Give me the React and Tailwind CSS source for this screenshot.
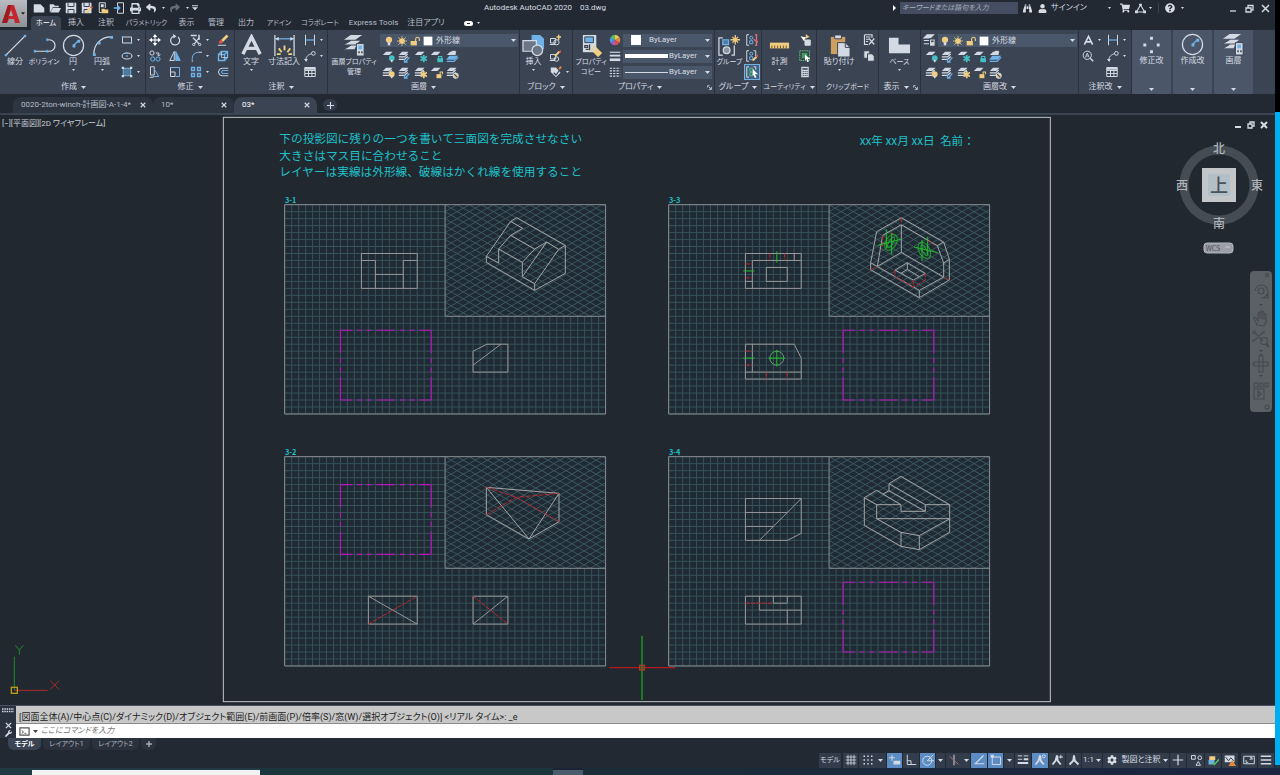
import {
  FaBinoculars,
  FaCog,
  FaPrint,
  FaQuestionCircle,
  FaReply,
  FaShare,
  FaShoppingCart,
  FaUser,
  FaWrench,
} from "react-icons/fa";

const W = "#d3dae3";
const B = "#6fb2ea";
const Y = "#f0cd80";

const Svg = ({ size = 12, box = 16, children }) => (
  <svg
    width={size}
    height={size}
    viewBox={`0 0 ${box} ${box}`}
    fill="none"
    stroke={W}
    strokeWidth="1.3"
    aria-hidden="true"
    className="shrink-0"
  >
    {children}
  </svg>
);

const Caret = () => (
  <svg width="5" height="3" viewBox="0 0 5 3" className="shrink-0" aria-hidden="true">
    <path d="M0 0H5L2.500 3Z" fill={W} />
  </svg>
);

const Dot = () => (
  <svg width="3" height="2" viewBox="0 0 3 2" className="shrink-0" aria-hidden="true">
    <path d="M0 0H3L1.500 2Z" fill={W} />
  </svg>
);

/* ---------- small icons (16 unit box) ---------- */
const icons = {
  newFile: (
    <path d="M1 3H10L15 8V14H1Z" fill={W} stroke="none" />
  ),
  open: (
    <path d="M1 14V3H6L8 5H13V7H5L2 13ZM5 8H16L13 14H2Z" fill={W} stroke="none" />
  ),
  save: (
    <>
      <path d="M1 1H15V15H1Z" fill={W} stroke="none" />
      <path d="M4 1V6H12V1M4 15V10H12V15" stroke="#39424f" />
    </>
  ),
  saveAs: (
    <>
      <path d="M1 1H14V15H1Z" fill={W} stroke="none" />
      <path d="M4 1V6H11V1M4 15V10H9" stroke="#39424f" />
      <path d="M7 14L14 7" stroke={Y} strokeWidth="3" />
      <path d="M13 8L15 6" stroke="#cf5b53" strokeWidth="3" />
    </>
  ),
  webOpen: (
    <>
      <path d="M3 1H11V8M3 1V14H6" />
      <path d="M5 3H9V7H5Z" fill={W} stroke="none" />
      <path d="M6 9H10L11 10H15V15H6Z" fill={Y} stroke="none" />
    </>
  ),
  webSave: (
    <>
      <path d="M6 1H14V15H6Z" />
      <path d="M1 8H8M6 5L9 8L6 11" stroke={B} strokeWidth="2" />
    </>
  ),
  rect: (
    <>
      <path d="M2 4H14V12H2Z" />
      <path d="M1 3h2v2H1zM13 11h2v2h-2z" fill={B} stroke="none" />
    </>
  ),
  ellipse: (
    <>
      <ellipse cx="8" cy="8" rx="6.5" ry="4" />
      <path d="M7 7h2v2H7zM7 3h2v2H7zM13.500 7h2v2h-2z" fill={B} stroke="none" />
    </>
  ),
  hatch: (
    <>
      <path d="M3 3H13V13H3Z" fill="#54789a" stroke={B} />
      <path d="M1 1h3v3H1zM12 1h3v3h-3zM1 12h3v3H1zM12 12h3v3h-3z" fill={W} stroke="none" />
    </>
  ),
  move: (
    <>
      <path d="M8 2V14M2 8H14" strokeWidth="1.800" />
      <path d="M8 0L11 4H5ZM8 16L5 12H11ZM0 8L4 5V11ZM16 8L12 11V5Z" fill="#fff" stroke="none" />
    </>
  ),
  rotate: (
    <>
      <path d="M12 4A6 6 0 1 1 6 3" strokeWidth="1.600" />
      <path d="M5 0L10 3L6 6Z" fill={W} stroke="none" />
    </>
  ),
  trim: (
    <>
      <path d="M1 2H9M12 1V8" stroke={W} strokeWidth="2" />
      <path d="M4 5L12 13M12 5L6 13" strokeWidth="1.600" />
      <circle cx="5" cy="14" r="1.500" />
      <circle cx="13" cy="14" r="1.500" />
    </>
  ),
  erase: (
    <>
      <path d="M6 10L14 2" stroke={Y} strokeWidth="3.500" />
      <path d="M3 12L7 9" stroke="#d9534f" strokeWidth="4" />
      <path d="M1 15H12" />
    </>
  ),
  copy: (
    <>
      <circle cx="4" cy="4" r="2.800" />
      <circle cx="5" cy="12" r="2.800" stroke={B} />
      <circle cx="12" cy="12" r="2.800" stroke={B} />
      <path d="M9 4H13V7M11 6L13 8L15 6" />
    </>
  ),
  mirror: (
    <>
      <path d="M7 2V14H1Z" />
      <path d="M9 2V14H15Z" fill={B} stroke={B} />
    </>
  ),
  fillet: (
    <>
      <path d="M3 15V11A8 8 0 0 1 11 3" stroke={B} />
      <path d="M11 3H16M3 15V16" />
    </>
  ),
  explode: (
    <>
      <path d="M2 6H10V14H2ZM2 6L6 2H14V10L10 14M10 6L14 2" stroke={B} strokeWidth="1.800" />
      <path d="M6 2V10H14" strokeWidth="1" />
    </>
  ),
  stretch: (
    <>
      <path d="M2 1H7V12H2Z" />
      <path d="M7 4L13 14H5" stroke={B} />
      <path d="M1 15H6" />
    </>
  ),
  scale: (
    <>
      <path d="M2 2H14V14H9" stroke={B} />
      <path d="M2 8H8V14H2ZM2 8V2" />
    </>
  ),
  array: (
    <path d="M2 2H6V6H2ZM10 2H14V6H10ZM2 10H6V14H2ZM10 10H14V14H10Z" stroke={B} strokeWidth="1.800" />
  ),
  offset: (
    <>
      <path d="M15 3H7A5 5 0 0 0 7 13H15" />
      <path d="M15 6H8A2 2 0 0 0 8 10H15" stroke={B} />
    </>
  ),
  dim: (
    <>
      <path d="M2 1V15M14 1V15" />
      <path d="M2 8H14" stroke={B} strokeWidth="1.600" />
    </>
  ),
  leader: (
    <>
      <path d="M2 14C3 8 6 6 10 5" />
      <circle cx="12.500" cy="4.500" r="2.500" />
      <path d="M0 12L3 16L5 12Z" fill={W} stroke="none" />
    </>
  ),
  table: (
    <>
      <path d="M1 2H15V14H1ZM1 6H15M1 10H15M6 6V14M10.500 6V14" />
      <path d="M1 2H15V5H1Z" fill={W} stroke="none" />
    </>
  ),
  bulb: (
    <>
      <circle cx="8" cy="6" r="5" fill={Y} stroke="none" />
      <path d="M6 10H10V15H6Z" fill={W} stroke="none" />
    </>
  ),
  sun: (
    <>
      <circle cx="8" cy="8" r="4.500" fill={Y} stroke="none" />
      <path d="M8 0V16M0 8H16M2 2L14 14M14 2L2 14" stroke={Y} strokeWidth="1.200" />
    </>
  ),
  unlock: (
    <>
      <path d="M1 8H11V15H1Z" fill={Y} stroke="none" />
      <path d="M9 8V5A3 3 0 0 1 15 5V8" stroke={Y} strokeWidth="1.800" />
    </>
  ),
  white: <path d="M1 1H15V15H1Z" fill="#fff" stroke="none" />,
  blockNew: (
    <>
      <path d="M2 6H9V12H2ZM1 14H8" />
      <circle cx="10" cy="11" r="3.500" />
      <path d="M13 1V8M10 4H16" stroke={Y} strokeWidth="1.800" />
    </>
  ),
  blockEdit: (
    <>
      <path d="M2 6H9V12H2ZM1 14H8" />
      <circle cx="10" cy="12" r="3" />
      <path d="M8 8L14 2" stroke={Y} strokeWidth="2.500" />
      <path d="M14 3L16 1" stroke="#d9534f" strokeWidth="2.500" />
    </>
  ),
  blockAttr: (
    <>
      <path d="M1 2H8L14 9L8 15L1 8Z" fill={W} stroke="none" />
      <path d="M5 9L8 12L14 4" stroke="#39424f" strokeWidth="1.600" />
      <path d="M12 4L15 1" stroke="#e0873f" strokeWidth="2.500" />
    </>
  ),
  wheel: (
    <>
      <path d="M8 8L8 1A7 7 0 0 1 14 4.500Z" fill="#e9c54b" stroke="none" />
      <path d="M8 8L14 4.500A7 7 0 0 1 14 11.500Z" fill="#e58a3d" stroke="none" />
      <path d="M8 8L14 11.500A7 7 0 0 1 8 15Z" fill="#d6504a" stroke="none" />
      <path d="M8 8L8 15A7 7 0 0 1 2 11.500Z" fill="#a45bd0" stroke="none" />
      <path d="M8 8L2 11.500A7 7 0 0 1 2 4.500Z" fill="#4a9be0" stroke="none" />
      <path d="M8 8L2 4.500A7 7 0 0 1 8 1Z" fill="#58b96a" stroke="none" />
    </>
  ),
  weights: (
    <>
      <path d="M1 3H15" strokeWidth="1.500" />
      <path d="M1 7.500H15" strokeWidth="2.500" />
      <path d="M1 13H15" strokeWidth="3.500" />
    </>
  ),
  linetypes: (
    <path d="M1 3H15M1 6.500H15M1 10H15M1 13.500H15" strokeDasharray="3 1.500" strokeWidth="1.400" />
  ),
  ungroup: (
    <>
      <path d="M4 1H1V15H4" />
      <path d="M12 1H14V15H12" stroke="#e06c75" strokeWidth="1.800" />
      <circle cx="7" cy="5" r="2" stroke={B} />
      <path d="M5 9H9V13H5Z" stroke={B} />
      <path d="M10 7L16 11" stroke="#e06c75" strokeWidth="2" />
    </>
  ),
  groupEdit: (
    <>
      <path d="M4 1H1V15H4M10 1H13V8" />
      <circle cx="7" cy="5" r="2" stroke={B} />
      <path d="M5 9H9V13H5Z" stroke={B} />
      <path d="M9 14L14 9" stroke={Y} strokeWidth="2.500" />
      <path d="M14 9L16 7" stroke="#d9534f" strokeWidth="2.500" />
    </>
  ),
  groupPick: (
    <>
      <path d="M4 1H1V15H4M10 1H13V5" />
      <path d="M5 3H9V7H5ZM5 9H9V13H5Z" stroke="#4fc27a" />
      <path d="M9 4L16 11L12 11L14 15L12 16L10 12L9 13Z" fill="#fff" stroke="none" />
    </>
  ),
  quickSelect: (
    <>
      <path d="M8 8H15V15H8Z" fill={W} />
      <path d="M2 3L7 10L8 6L12 5Z" fill="#fff" stroke="none" />
      <path d="M9 0L14 4L9 6Z" fill={Y} stroke="none" />
    </>
  ),
  selectAll: (
    <>
      <path d="M1 1H14V14H1Z" stroke="#58c472" strokeDasharray="2 1" />
      <path d="M4 4H11V11H4Z" fill="#3fa060" stroke="none" />
      <path d="M8 6L15 12L12 12L13 16L11 16L10 12L8 14Z" fill="#fff" stroke="none" />
    </>
  ),
  calc: (
    <>
      <path d="M3 1H13V15H3Z" fill={W} stroke="none" />
      <path d="M4.500 4H11.500" stroke="#39424f" strokeWidth="2" />
      <path d="M5 7.500H11.500M5 10H11.500M5 12.500H11.500" stroke="#39424f" strokeDasharray="1.500 1" />
    </>
  ),
  cut: (
    <>
      <path d="M2 1H12V5M2 1V14H7M4 4H10M4 7H8M4 10H7" strokeWidth="1.600" />
      <path d="M8 6L15 14M15 6L8 14" strokeWidth="1.600" />
    </>
  ),
  copyClip: (
    <>
      <path d="M1 1H9V11H1Z" fill={W} stroke="#39424f" />
      <path d="M6 5H12L15 8V15H6Z" fill={W} stroke="#39424f" />
    </>
  ),
  layerState: (
    <>
      <path d="M5 1H13L9 5H1ZM1 8H9M1 12H8" fill={W} />
      <path d="M8 6H15V15H8Z" fill={W} stroke="#39424f" />
      <path d="M10 8H13V10H10Z" fill="#39424f" stroke="none" />
    </>
  ),
  zoomA: (
    <>
      <circle cx="7" cy="7" r="5.500" />
      <path d="M11 11L15 15" strokeWidth="2" />
      <path d="M4.500 10L7 4L9.500 10M5.500 8H8.500" strokeWidth="1.100" />
    </>
  ),
};

const Icon = ({ name, size = 12 }) => <Svg size={size}>{icons[name]}</Svg>;

/* stacked sheets with a coloured badge in the lower right corner */
const LayerIcon = ({ sheets = 1, badge }) => (
  <Svg size={13}>
    <path d="M5 2H13L9 6H1Z" fill={W} stroke="none" />
    {sheets > 1 && <path d="M1 8.500H8L12 5M1 11.500H8L12 8" strokeWidth="1.500" />}
    {badge === "teal" && <circle cx="12" cy="10" r="3.500" fill="#45bfc6" stroke="none" />}
    {badge === "bulb" && <circle cx="12" cy="10" r="3.500" fill={Y} stroke="none" />}
    {(badge === "teal" || badge === "bulb") && <path d="M12 12V15" strokeWidth="2" />}
    {badge === "arrow" && <path d="M9 15L14 9M8 11V15H12" stroke={B} strokeWidth="1.600" />}
    {badge === "freeze" && (
      <path d="M12 6V15M8 8L16 13M16 8L8 13" stroke="#45bfc6" strokeWidth="2.200" />
    )}
    {badge === "sun" && <path d="M12 6V15M8 8L16 13M16 8L8 13" stroke={Y} strokeWidth="2.200" />}
    {badge === "lock" && (
      <>
        <path d="M9 10H16V15H9Z" fill="#45bfc6" stroke="none" />
        <path d="M10.500 10V8H14.500V10" stroke="#45bfc6" />
      </>
    )}
    {badge === "unlock" && (
      <>
        <path d="M8 10H14V15H8Z" fill={Y} stroke="none" />
        <path d="M12.500 10V7.500H15.500V10" stroke={Y} />
      </>
    )}
    {badge === "off" && (
      <>
        <circle cx="12" cy="12" r="3" fill={Y} stroke={W} />
        <path d="M10 10L14 14" stroke="#39424f" />
      </>
    )}
    {badge === "match" && (
      <>
        <path d="M4 7H15L11 12H0Z" fill={B} stroke="none" />
        <path d="M7 1H12V6H7Z" fill={W} stroke="none" />
        <path d="M1 14H10L15 9" stroke={B} />
      </>
    )}
  </Svg>
);

const layerRows = [
  [
    { label: "非表示", sheets: 1, badge: "teal" },
    { label: "選択表示", sheets: 2, badge: "arrow" },
    { label: "フリーズ", sheets: 1, badge: "freeze" },
    { label: "ロック", sheets: 1, badge: "lock" },
    { label: "現在層に設定", sheets: 1, badge: "match" },
  ],
  [
    { label: "全画層表示", sheets: 2, badge: "bulb" },
    { label: "選択表示解除", sheets: 2, badge: "arrow" },
    { label: "全画層フリーズ解除", sheets: 2, badge: "sun" },
    { label: "ロック解除", sheets: 1, badge: "unlock" },
    { label: "一致", sheets: 2, badge: "off" },
  ],
];

/* ---------- large icons (24 unit box) ---------- */
const BigIcon = ({ children }) => (
  <Svg size={23} box={24}>
    {children}
  </Svg>
);

const sheetStack = (
  <>
    <path d="M8 1H20L13 6H1ZM8 7H18L13 11H1ZM8 12H14L12 16H1Z" fill={W} stroke="none" />
    <path d="M8 7L1 11M8 12L1 16" stroke="#39424f" strokeWidth="1" />
    <path d="M14 10H22V23H14Z" fill={W} stroke="#39424f" strokeWidth="1" />
    <path d="M16 12H20V16H16Z" fill={B} stroke="none" />
    <path d="M16 18H17.500V20H16ZM19 18H20.500V20H19Z" fill="#39424f" stroke="none" />
  </>
);

const big = {
  line: (
    <>
      <path d="M2 22L22 2" />
      <path d="M1 21h2v2H1zM21 1h2v2h-2z" fill={B} stroke={B} strokeWidth="0.500" />
    </>
  ),
  pline: (
    <>
      <path d="M2 18H17A6 6 0 0 0 17 6H16" />
      <path d="M1 17h2v2H1zM14 17h2v2h-2zM14 5h2v2h-2z" fill={B} stroke={B} strokeWidth="0.500" />
    </>
  ),
  circle: (
    <>
      <circle cx="12" cy="12" r="10.500" />
      <path d="M12 12L17 7" stroke={B} />
      <path d="M11 11h3v3h-3zM16 6h3v3h-3z" fill={B} stroke="none" />
    </>
  ),
  arc: (
    <>
      <path d="M3 21C3 11 10 3 21 3" />
      <path d="M2 20h3v3H2zM7 8h3v3H7zM20 2h3v3h-3z" fill={B} stroke="none" />
    </>
  ),
  text: <path d="M3 21L12 3L21 21M7 15H17" strokeWidth="3.500" />,
  dimension: (
    <>
      <path d="M2 1V23M22 1V23" />
      <path d="M2 5H22" stroke={B} />
      <path d="M2 5L6 3V7ZM22 5L18 3V7Z" fill={W} stroke="none" />
      <path d="M12 12V17M6 15L9 19M18 15L15 19M4 21H8M16 21H20" stroke={Y} strokeWidth="2" />
    </>
  ),
  layers: sheetStack,
  insert: (
    <>
      <path d="M10 1H19L23 5V16H10Z" fill={B} stroke="none" />
      <path d="M1 7H15V18H1Z" fill="#6b7686" />
      <circle cx="16" cy="17" r="5.500" fill="#6b7686" />
    </>
  ),
  props: (
    <>
      <path d="M3 1H17V19H3Z" fill={W} stroke="none" />
      <path d="M5 3H14V9H5Z" fill={B} stroke="#39424f" strokeWidth="1" />
      <path d="M5 12H8V14H5ZM10 11V17M6 16H9" stroke="#39424f" />
      <path d="M13 14L21 22" stroke={Y} strokeWidth="6" />
      <path d="M13 18L17 14" strokeWidth="2" />
    </>
  ),
  group: (
    <>
      <path d="M5 4H1V22H5M14 22H17V12" />
      <path d="M5 6H11V11H5Z" fill="#4f7ba5" stroke={B} />
      <circle cx="9" cy="17" r="3.500" fill="#8a94a2" />
      <path d="M18 1V11M13 6H23M15 3L21 9M21 3L15 9" stroke={Y} strokeWidth="1.400" />
    </>
  ),
  ruler: (
    <>
      <path d="M2 9H22V15H2Z" fill={Y} stroke="none" />
      <path d="M4 12V15M7 12V15M10 12V15M13 12V15M16 12V15M19 12V15" stroke="#6b5526" strokeWidth="1" />
    </>
  ),
  paste: (
    <>
      <path d="M3 3H18V21H3Z" fill="#cf9f62" stroke="none" />
      <path d="M7 1H14V5H7Z" fill={W} stroke="#39424f" strokeWidth="1" />
      <path d="M10 9H18L23 14V24H10Z" fill={W} stroke="#39424f" strokeWidth="1" />
      <path d="M18 9V14H23" stroke="#39424f" strokeWidth="1" />
    </>
  ),
  base: <path d="M1 4H11V11H23V20H1Z" fill={W} stroke="none" />,
  modify: (
    <path
      d="M10.500 4h3v3h-3zM3.500 11h3v3h-3zM17.500 11h3v3h-3zM10.500 18h3v3h-3z"
      fill={W}
      stroke="none"
    />
  ),
};

/* ---------- ribbon building blocks ---------- */
const Panel = ({ title, caret = true, launcher, className, children }) => (
  <section
    className={`flex shrink-0 flex-col border-r border-[#2a313c] bg-[#3b4453] ${className}`}
  >
    <div className="flex h-[50px]">{children}</div>
    <div className="flex h-[14px] items-center">
      <button className="flex flex-1 items-center justify-center gap-1 whitespace-nowrap">
        {title}
        {caret && <Caret />}
      </button>
      {launcher && (
        <button aria-label={`${title} 設定`} className="pr-[2px]">
          <Svg size={5} box={8}>
            <path d="M1 4V1H4M3 3L7 7M7 3V7H3" />
          </Svg>
        </button>
      )}
    </div>
  </section>
);

const BigButton = ({ icon, lines, caret, small, className }) => (
  <button
    className={`flex shrink-0 flex-col items-center pt-[4px] ${className} ${
      small ? "text-[7px]" : "text-[8px]"
    }`}
  >
    <BigIcon>{big[icon]}</BigIcon>
    {lines.map((line) => (
      <span key={line} className="whitespace-nowrap leading-[10px]">
        {line}
      </span>
    ))}
    {caret && (
      <span className="mt-[2px]">
        <Dot />
      </span>
    )}
  </button>
);

const SmallButton = ({ name, label, caret, active, wide }) => (
  <button
    aria-label={label}
    className={`flex h-4 items-center justify-center ${wide ? "w-6 gap-1" : "w-4"} ${
      active ? "border border-[#6fb2ea] bg-[#44617f]" : ""
    }`}
  >
    <Icon name={name} />
    {caret && <Dot />}
  </button>
);

const LayerCombo = ({ className }) => (
  <label
    className={`mt-[4px] flex h-[13px] items-center gap-[3px] bg-[#4a5669] px-[2px] ${className}`}
  >
    <Icon name="bulb" size={10} />
    <Icon name="sun" size={10} />
    <Icon name="unlock" size={10} />
    <Icon name="white" size={10} />
    <select aria-label="画層" className="min-w-0 flex-1 appearance-none bg-transparent outline-none">
      <option>外形線</option>
    </select>
    <Caret />
  </label>
);

const LayerTools = () =>
  layerRows.map((row, i) => (
    <div key={i} className="flex h-4">
      {row.map((tool) => (
        <button key={tool.label} aria-label={tool.label} className="flex w-4 items-center justify-center">
          <LayerIcon sheets={tool.sheets} badge={tool.badge} />
        </button>
      ))}
    </div>
  ));

const PropertyRow = ({ icon, label, children }) => (
  <div className="flex h-4 items-center gap-[2px]">
    <Icon name={icon} />
    <label className="flex h-[13px] flex-1 items-center bg-[#4a5669] px-[2px]">
      {children}
      <select aria-label={label} className="w-[34px] appearance-none bg-transparent outline-none">
        <option>ByLayer</option>
      </select>
      <span className="ml-auto">
        <Caret />
      </span>
    </label>
  </div>
);

const CollapsedPanel = ({ icon, label }) => (
  <button className="mr-[2px] flex w-[39px] shrink-0 flex-col items-center bg-[#4b5669] pt-[3px]">
    <BigIcon>{big[icon]}</BigIcon>
    <span className="leading-[10px]">{label}</span>
    <span className="mt-auto mb-[3px]">
      <Caret />
    </span>
  </button>
);

const Ribbon = () => (
  <div className="flex h-16 overflow-hidden bg-[#3b4453] pl-[2px]">
    <Panel title="作成" className="w-[144px]">
      <BigButton icon="line" lines={["線分"]} className="w-[26px]" />
      <BigButton icon="pline" lines={["ポリライン"]} small className="w-[32px]" />
      <BigButton icon="circle" lines={["円"]} caret className="w-[26px]" />
      <BigButton icon="arc" lines={["円弧"]} caret className="w-[32px]" />
      <div className="pt-[2px]">
        <SmallButton name="rect" label="長方形" caret wide />
        <SmallButton name="ellipse" label="楕円" caret wide />
        <SmallButton name="hatch" label="ハッチング" caret wide />
      </div>
    </Panel>
    <Panel title="修正" className="w-[89px]">
      <div className="flex gap-1 pt-[2px] pl-[1px]">
        <div>
          <SmallButton name="move" label="移動" />
          <SmallButton name="copy" label="複写" />
          <SmallButton name="stretch" label="ストレッチ" />
        </div>
        <div>
          <SmallButton name="rotate" label="回転" />
          <SmallButton name="mirror" label="鏡像" />
          <SmallButton name="scale" label="尺度変更" />
        </div>
        <div>
          <SmallButton name="trim" label="トリム" caret wide />
          <SmallButton name="fillet" label="フィレット" caret wide />
          <SmallButton name="array" label="配列複写" caret wide />
        </div>
        <div>
          <SmallButton name="erase" label="削除" />
          <SmallButton name="explode" label="分解" />
          <SmallButton name="offset" label="オフセット" />
        </div>
      </div>
    </Panel>
    <Panel title="注釈" className="w-[93px]">
      <BigButton icon="text" lines={["文字"]} caret className="w-[32px]" />
      <BigButton icon="dimension" lines={["寸法記入"]} className="w-[34px]" />
      <div className="pt-[2px]">
        <SmallButton name="dim" label="長さ寸法" caret wide />
        <SmallButton name="leader" label="引出線" caret wide />
        <div className="pl-[1px]">
          <SmallButton name="table" label="表" />
        </div>
      </div>
    </Panel>
    <Panel title="画層" className="w-[192px]">
      <BigButton icon="layers" lines={["画層プロパティ", "管理"]} small className="w-[52px]" />
      <div className="w-[138px]">
        <LayerCombo className="pl-1" />
        <div className="pt-[1px]">
          <LayerTools />
        </div>
      </div>
    </Panel>
    <Panel title="ブロック" className="w-[53px]">
      <BigButton icon="insert" lines={["挿入"]} caret className="w-[27px]" />
      <div className="pt-[2px]">
        <SmallButton name="blockNew" label="作成" />
        <SmallButton name="blockEdit" label="編集" />
        <SmallButton name="blockAttr" label="属性編集" caret wide />
      </div>
    </Panel>
    <Panel title="プロパティ" launcher className="w-[142px]">
      <BigButton icon="props" lines={["プロパティ", "コピー"]} small className="w-[36px]" />
      <div className="w-[103px] pt-[2px]">
        <PropertyRow icon="wheel" label="オブジェクトの色">
          <span className="mr-2 ml-[6px] h-[10px] w-[10px] bg-white" />
        </PropertyRow>
        <PropertyRow icon="weights" label="線の太さ">
          <span className="mr-[1px] h-[4px] w-[43px] bg-white" />
        </PropertyRow>
        <PropertyRow icon="linetypes" label="線種">
          <span className="mr-[1px] h-[1px] w-[43px] bg-[#d3dae3]" />
        </PropertyRow>
      </div>
    </Panel>
    <Panel title="グループ" className="w-[47px]">
      <BigButton icon="group" lines={["グループ"]} small className="w-[29px]" />
      <div className="pt-[2px]">
        <SmallButton name="ungroup" label="グループ解除" />
        <SmallButton name="groupEdit" label="グループ編集" />
        <SmallButton name="groupPick" label="グループ選択" active />
      </div>
    </Panel>
    <Panel title="ユーティリティ" className="w-[55px] text-[7px]">
      <BigButton icon="ruler" lines={["計測"]} caret className="w-[35px]" />
      <div className="pt-[2px]">
        <SmallButton name="quickSelect" label="クイック選択" />
        <SmallButton name="selectAll" label="すべて選択" />
        <SmallButton name="calc" label="電卓" />
      </div>
    </Panel>
    <Panel title="クリップボード" caret={false} className="w-[62px] text-[7px]">
      <BigButton icon="paste" lines={["貼り付け"]} caret className="w-[44px]" />
      <div className="pt-[2px]">
        <SmallButton name="cut" label="切り取り" />
        <SmallButton name="copyClip" label="コピー" />
      </div>
    </Panel>
    <Panel title="表示" launcher className="w-[42px]">
      <BigButton icon="base" lines={["ベース"]} small caret className="w-[41px]" />
    </Panel>
    <Panel title="画層改" className="w-[158px]">
      <div className="w-[156px] pl-[2px]">
        <div className="flex gap-[2px]">
          <button aria-label="画層プロパティ管理" className="mt-[4px]">
            <Icon name="layerState" size={13} />
          </button>
          <LayerCombo className="flex-1" />
        </div>
        <div className="pt-[1px]">
          <LayerTools />
        </div>
      </div>
    </Panel>
    <Panel title="注釈改" className="w-[53px]">
      <div className="pt-[2px] pl-[1px]">
        <button aria-label="文字" className="flex h-4 w-6 items-center justify-center gap-1">
          <Svg size={11} box={24}>
            {big.text}
          </Svg>
          <Dot />
        </button>
        <SmallButton name="zoomA" label="文字検索" />
      </div>
      <div className="pt-[2px]">
        <SmallButton name="dim" label="長さ寸法" caret wide />
        <SmallButton name="leader" label="引出線" caret wide />
        <SmallButton name="table" label="表" />
      </div>
    </Panel>
    <CollapsedPanel icon="modify" label="修正改" />
    <CollapsedPanel icon="circle" label="作成改" />
    <CollapsedPanel icon="layers" label="画層" />
  </div>
);

/* ---------- title bar and menu tabs ---------- */
const quickIcons = [
  { name: "newFile", label: "新規作成" },
  { name: "open", label: "開く" },
  { name: "save", label: "上書き保存" },
  { name: "saveAs", label: "名前を付けて保存" },
  { name: "webOpen", label: "Web から開く" },
  { name: "webSave", label: "Web に保存" },
];

const menuTabs = [
  { label: "ホーム", width: "w-[30px] text-[7px]" },
  { label: "挿入", width: "w-[30px]" },
  { label: "注釈", width: "w-[30px]" },
  { label: "パラメトリック", width: "w-[51px] text-[7px]" },
  { label: "表示", width: "w-[29px]" },
  { label: "管理", width: "w-[30px]" },
  { label: "出力", width: "w-[30px]" },
  { label: "アドイン", width: "w-[36px] text-[7px]" },
  { label: "コラボレート", width: "w-[46px] text-[7px]" },
  { label: "Express Tools", width: "w-[61px]" },
  { label: "注目アプリ", width: "w-[44px]" },
];

const Header = () => (
  <header className="flex bg-[#222933]">
    <button
      aria-label="アプリケーション メニュー"
      className="flex h-[27px] w-[27px] shrink-0 items-center justify-center gap-[1px] bg-linear-to-b from-[#b9bdc2] to-[#8d9196]"
    >
      <svg width="18" height="20" viewBox="0 0 18 20" aria-hidden="true">
        <path d="M0 19L6 1H12L18 19H13L12 15H7L5 19Z" fill="#c4262e" />
        <path d="M9 6L11 12H7Z" fill="#a5a9ae" />
        <path d="M0 19L6 1L9 1L5 19Z" fill="#9c1b22" />
      </svg>
      <svg width="4" height="3" viewBox="0 0 5 3" aria-hidden="true">
        <path d="M0 0H5L2.500 3Z" fill="#222" />
      </svg>
    </button>
    <div className="min-w-0 flex-1">
      <div className="flex h-4 items-center">
        <div className="flex w-[173px] shrink-0 items-center pl-1">
          {quickIcons.map((q) => (
            <button key={q.label} aria-label={q.label} className="flex w-4 justify-center">
              <Icon name={q.name} />
            </button>
          ))}
          <button aria-label="印刷" className="flex w-4 justify-center text-[#d3dae3]">
            <FaPrint size={11} />
          </button>
          <button aria-label="元に戻す" className="flex w-6 items-center justify-center gap-[6px]">
            <FaReply size={10} />
            <Dot />
          </button>
          <button aria-label="やり直し" className="flex w-6 items-center justify-center gap-[6px] text-[#626b78]">
            <FaShare size={10} />
            <Dot />
          </button>
          <button aria-label="カスタマイズ" className="flex w-2 justify-center">
            <Svg size={6} box={8}>
              <path d="M0 1H8" />
              <path d="M0 3H8L4 7Z" fill={W} stroke="none" />
            </Svg>
          </button>
        </div>
        <h1 className="flex flex-1 justify-center gap-2 whitespace-nowrap">
          <span>Autodesk AutoCAD 2020</span>
          <span>03.dwg</span>
        </h1>
        <div className="flex w-[385px] shrink-0 items-center">
          <svg width="10" height="6" viewBox="0 0 10 6" aria-hidden="true">
            <path d="M3 0L6 3L3 6Z" fill="#fff" />
          </svg>
          <input
            aria-label="検索"
            placeholder="キーワードまたは語句を入力"
            className="h-3 w-[118px] bg-[#454e60] px-[2px] text-[7px] italic outline-none placeholder:text-[#a9b1bd]"
          />
          <button aria-label="検索" className="flex w-[18px] justify-center">
            <FaBinoculars size={9} />
          </button>
          <button className="flex items-center gap-1 pl-[2px]">
            <FaUser size={9} />
            サインイン
          </button>
          <span className="ml-auto flex w-[167px] items-center">
            <span className="flex w-2">
              <Dot />
            </span>
            <button aria-label="ストア" className="ml-[4px]">
              <FaShoppingCart size={10} />
            </button>
            <button aria-label="Autodesk App Store" className="ml-[5px] flex items-center gap-[3px]">
              <Svg size={11}>
                <path d="M8 3L14 13H2Z" strokeWidth="1.600" />
                <path d="M6 1h4v3H6zM0 11h4v4H0zM12 11h4v4h-4z" fill={W} stroke="none" />
              </Svg>
              <Dot />
            </button>
            <span className="mx-[6px] h-[10px] w-[1px] bg-[#3b4453]" />
            <button aria-label="ヘルプ" className="flex items-center gap-[6px]">
              <FaQuestionCircle size={10} />
              <Dot />
            </button>
            <span className="ml-auto flex w-[50px] items-center">
              <button aria-label="最小化" className="w-4 pl-1">
                <Svg size={8} box={8}>
                  <path d="M1 7H7" />
                </Svg>
              </button>
              <button aria-label="元のサイズに戻す" className="flex w-4 justify-center">
                <Svg size={9} box={9}>
                  <path d="M1 4H6V8H1ZM3 4V1.500H8V6H6" />
                </Svg>
              </button>
              <button aria-label="閉じる" className="flex w-4 justify-center">
                <Svg size={9} box={9}>
                  <path d="M1 1L8 8M8 1L1 8" strokeWidth="1.500" />
                </Svg>
              </button>
            </span>
          </span>
        </div>
      </div>
      <nav className="flex h-[14px] pl-1 text-[#b6bdc7]">
        {menuTabs.map((tab, i) => (
          <button
            key={tab.label}
            className={`flex shrink-0 items-center justify-center whitespace-nowrap ${tab.width} ${
              i === 0 ? "rounded-t-sm bg-[#3b4453] text-white" : ""
            }`}
          >
            {tab.label}
          </button>
        ))}
        <button aria-label="表示切り替え" className="ml-4 flex items-center gap-1">
          <span className="flex h-[5px] w-[9px] items-center justify-center rounded-sm bg-white">
            <span className="h-[1px] w-[3px] bg-[#222933]" />
          </span>
          <Dot />
        </button>
      </nav>
    </div>
  </header>
);

const FileTab = ({ name, active, className }) => (
  <div
    className={`flex h-4 items-center justify-between rounded-t-lg pr-[7px] pl-2 ${className} ${
      active ? "bg-[#3b4453] text-white" : "bg-[#2d3541] text-[#b6bdc7]"
    }`}
  >
    <button className="whitespace-nowrap">{name}</button>
    <button aria-label={`${name} を閉じる`}>
      <Svg size={6} box={8}>
        <path d="M1 1L7 7M7 1L1 7" strokeWidth="1.500" />
      </Svg>
    </button>
  </div>
);

/* ---------- model space ---------- */
// one grid square in drawing units; three units make one screen pixel
const CELL = 20.93;
const COLS = 46;
const ROWS = 30;
const ISO_COL = 23;
const ISO_ROWS = 16;

const sheets = [
  {
    label: "3-1",
    x: 810,
    y: 570,
    left: 44,
    top: 44,
    answer: [8, 18],
    solid:
      "M11 7H19V12H11ZM11 8H13V12M19 8H17V12M13 10H17M27 21L29 20H32V24H27ZM27 23L31 20",
    isoSolid:
      "M649 199L722 94L740 83L886 166V250L794 301L649 217ZM794 301V281L866 178L886 166M794 281L757 260V217L794 177L830 156L866 178M757 260L830 156M649 199L686 219V177L757 217M686 177L722 136L794 177M722 136L758 115L722 94",
  },
  {
    label: "3-3",
    x: 1965,
    y: 570,
    left: 41,
    top: 44,
    answer: [25, 18],
    solid:
      "M11 7H19V12H11ZM12 12V8H19M18 7V8M11 11H12M14 9H17V11H14ZM11 20H18L19 22V25H11ZM12 20V24M11 24H19",
    hidden:
      "M14.500 7V8M16.600 7V8M11 8.500H12M11 10.500H12M11 21H12M11 23H12M14 24V25M17 24V25",
    center: "M15.500 6.700V8.300M10.700 9.500H12.300M10.700 22H12.300M15.500 20.800V23.200M14.300 22H16.700",
    hole: [15.5, 22],
    isoSolid:
      "M665 125L739 83L866 156L883 208V270L793 323L647 239V218ZM647 218L793 301V323M793 301L866 261V219L883 208M866 219L847 167L866 156M847 167L739 104V187L866 261M739 104L683 136L667 229L739 187M757 218L811 250L775 270L720 240ZM757 218V238L792 259M757 238L738 250",
    isoHidden:
      "M739 83V104M647 239L667 229M883 270L866 261M720 240V260L775 291L811 270V250M775 270V291M683 136V175M708 128L722 136M820 150L838 165",
    isoCenter: "M668 166L740 147M694 118V174M710 130V194M777 171L848 188M818 140V194M801 150V213",
    isoHoles: [
      [708, 157, 30],
      [808, 181, -30],
    ],
  },
  {
    label: "3-2",
    x: 810,
    y: 1320,
    left: 44,
    top: 50,
    answer: [8, 4],
    solid: "M12 20H19V24H12ZM12 20L19 24M27 20H32V24H27ZM27 24L32 20",
    hidden: "M12 24L19 20M27 20L32 24",
    isoSolid:
      "M649 142L867 160V245L777 297L649 224ZM649 142L777 297L867 160",
    isoHidden: "M649 142L739 172L867 245M649 224L739 172L867 160",
  },
  {
    label: "3-4",
    x: 1965,
    y: 1320,
    left: 41,
    top: 50,
    answer: [25, 18],
    solid:
      "M11 6H19V11L17 12H11ZM19 6L13 12M11 8H17M11 10H15M11 20H19V24H11ZM13 20V22H19M15 20V21H17V20M17 22V24",
    hidden: "M11 21H15",
    isoSolid:
      "M628 173L665 151L738 194V214H811V194H884V277L793 329L738 319L628 256ZM628 173L665 194H738M665 194V236H884M811 194L702 131L738 109L884 194M702 131V152L811 214M702 152L684 162M665 236L738 277L793 287L884 236M738 277V319M793 287V329",
  },
];

const range = (n) => Array.from({ length: n }, (_, i) => i);

const gridPath =
  range(COLS + 1)
    .map((i) => `M${i} 0V${ROWS}`)
    .join("") +
  range(ROWS + 1)
    .map((i) => `M0 ${i}H${COLS}`)
    .join("");

const isoRise = ISO_COL * Math.tan(Math.PI / 6);
const isoPath = range(ISO_ROWS + 28)
  .map((i) => {
    const k = i - 14;
    return `M0 ${k}L${ISO_COL} ${k + isoRise}M0 ${k}L${ISO_COL} ${k - isoRise}`;
  })
  .join("");

const AnswerFrame = ({ x, y }) => (
  <g stroke="#b816bd" strokeWidth="0.16" transform={`translate(${x} ${y})`}>
    <path
      d="M0 0H13M0 10H13"
      strokeDasharray="1.700 0.680 0.700 0.680 0.700 0.680 2.700 0.680 0.700 0.680 0.700 0.680 1.700 9"
    />
    <path d="M0 0V10M13 0V10" strokeDasharray="3.300 0.670 0.700 0.670 0.700 0.670 3.300 9" />
  </g>
);

const Sheet = ({ sheet }) => (
  <g transform={`translate(${sheet.x} ${sheet.y})`}>
    <text x={sheet.left + 1} y={sheet.top - 4} fontSize="22" fontWeight="700" fill="#1fc0c8">
      {sheet.label}
    </text>
    <g transform={`translate(${sheet.left} ${sheet.top}) scale(${CELL})`} strokeWidth="0.143">
      <rect width={COLS} height={ROWS} fill="#202a34" />
      <path d={gridPath} stroke="#36535b" strokeWidth="0.14" />
      <rect x={ISO_COL} width={ISO_COL} height={ISO_ROWS} fill="#202a34" />
      <svg x={ISO_COL} y="0" width={ISO_COL} height={ISO_ROWS} overflow="hidden">
        <path d={isoPath} stroke="#3f5d66" strokeWidth="0.13" />
      </svg>
      <path d={`M0 0H${COLS}V${ROWS}H0ZM${ISO_COL} 0V${ISO_ROWS}H${COLS}`} stroke="#868c91" />
      <AnswerFrame x={sheet.answer[0]} y={sheet.answer[1]} />
      <path d={sheet.solid} stroke="#969899" />
      {sheet.hidden && <path d={sheet.hidden} stroke="#c0272d" strokeDasharray="0.600 0.200" />}
      {sheet.hole && (
        <circle cx={sheet.hole[0]} cy={sheet.hole[1]} r="1" stroke="#5fa068" />
      )}
      {sheet.center && <path d={sheet.center} stroke="#1fc02a" />}
    </g>
    <g strokeWidth="3">
      <path d={sheet.isoSolid} stroke="#a3a5a6" />
      {sheet.isoHidden && <path d={sheet.isoHidden} stroke="#c0272d" strokeDasharray="14 5" />}
      {sheet.isoHoles?.map(([x, y, turn]) => (
        <g key={x} transform={`translate(${x} ${y}) rotate(${turn})`} stroke="#1fa52a">
          <ellipse rx="16" ry="26" />
          <ellipse rx="6" ry="18" />
        </g>
      ))}
      {sheet.isoCenter && <path d={sheet.isoCenter} stroke="#1fc02a" />}
    </g>
  </g>
);

const Drawing = () => (
  <svg
    viewBox="0 345 3825 1770"
    className="block h-full w-full [font-feature-settings:normal]"
    fill="none"
    fontFamily="'Noto Sans CJK JP', sans-serif"
  >
    <rect x="670" y="352" width="2481" height="1753" stroke="#c3c5cb" strokeWidth="3" />
    <g fontSize="35" fill="#1fc0c8">
      <text x="838" y="430">下の投影図に残りの一つを書いて三面図を完成させなさい</text>
      <text x="838" y="479">大きさはマス目に合わせること</text>
      <text x="838" y="528">レイヤーは実線は外形線、破線はかくれ線を使用すること</text>
      <text x="2579" y="434" xmlSpace="preserve">xx年 xx月 xx日  名前：</text>
    </g>
    {sheets.map((sheet) => (
      <Sheet key={sheet.label} sheet={sheet} />
    ))}
    {/* crosshair */}
    <path d="M1828 2003H2026" stroke="#b3181c" strokeWidth="4" />
    <path d="M1926 1907V2100" stroke="#17a51f" strokeWidth="4" />
    <rect x="1919" y="1996" width="14" height="14" stroke="#b03a2a" strokeWidth="4" />
    {/* UCS icon */}
    <path d="M43 1970V2070" stroke="#1f8a2c" strokeWidth="3" />
    <path d="M43 2071H143" stroke="#b02a2c" strokeWidth="3" />
    <rect x="34" y="2062" width="18" height="18" stroke="#b89a1d" strokeWidth="4" />
    <path d="M46 1936L58 1950L70 1936M58 1950V1964" stroke="#1f8a2c" strokeWidth="3" />
    <path d="M151 2042L177 2068M177 2042L151 2068" stroke="#b02a2c" strokeWidth="3" />
  </svg>
);

const ViewCube = () => (
  <svg
    width="92"
    height="116"
    viewBox="0 0 92 116"
    className="absolute top-[24px] right-[10px]"
    fontFamily="'Noto Sans CJK JP', sans-serif"
    textAnchor="middle"
  >
    <circle cx="46" cy="46" r="35" fill="none" stroke="#454c54" strokeWidth="9" />
    <rect x="29" y="29" width="34" height="34" fill="#c3c6c8" />
    <rect x="35" y="35" width="22" height="22" fill="#b3bfc6" />
    <g fontSize="12" fontWeight="500" fill="#b0b5bb">
      <text x="46" y="14">北</text>
      <text x="46" y="89">南</text>
      <text x="9" y="51">西</text>
      <text x="84" y="51">東</text>
    </g>
    <text x="46" y="53" fontSize="18" fontWeight="500" fill="#4a5157">上</text>
    <rect x="31" y="104" width="29" height="10" rx="3" fill="#9c9ea8" stroke="#b3b5be" />
    <text x="40" y="112" fontSize="7" fill="#4d515b">WCS</text>
    <path d="M52 108H57" stroke="#c9cbd2" />
  </svg>
);

const NavigationBar = () => (
  <div className="absolute top-[156px] right-[3px] flex h-[141px] w-[22px] flex-col items-center justify-between rounded-sm bg-[#5b6065] py-[2px]">
    <svg width="18" height="137" viewBox="0 0 18 137" fill="none" stroke="#454a4f" strokeWidth="1.100" aria-hidden="true">
      <circle cx="15" cy="2" r="1.500" />
      <path d="M3 18A6.500 6.500 0 1 1 9 25H16V18" />
      <circle cx="9" cy="18" r="3" />
      <path d="M7 31H11L9 33ZM7 77H11L9 79ZM7 102H11L9 104Z" fill="#3e4348" stroke="none" />
      <path d="M5 52L2 46C1 44 3 44 4 45L6 48V41C6 39 8 39 8 41V46V39C8 37 10 37 10 39V46V40C10 38 12 38 12 40V47V42C12 40 14 40 14 42V49L12 53Z" />
      <path d="M2 59L11 68M11 59L2 68M1 58h3M1 58v3M12 58v3M1 69v-3" />
      <circle cx="12" cy="68" r="3.500" />
      <path d="M14 71L17 74" strokeWidth="2" />
      <path d="M7 83H11V99H7ZM2 89H16V93H2ZM7 83L9 81L11 83M2 89L1 91L2 93" />
      <path d="M2 110H6V114H2ZM8 110H11V114H8ZM13 110H16V114H13ZM2 116H12V126H2ZM6 118L9 121L6 124Z" />
      <circle cx="15" cy="134" r="2" />
    </svg>
  </div>
);

const ModelSpace = () => (
  <main className="relative min-h-0 flex-1 bg-[#212830]">
    <Drawing />
    <div className="absolute top-[3px] left-[2px] flex text-[#c9ced5]">
      <button>[−]</button>
      <button>[平面図]</button>
      <button>[2D ワイヤフレーム]</button>
    </div>
    <div className="absolute top-[6px] right-[7px] flex gap-[5px]">
      <button aria-label="図面を最小化">
        <Svg size={8} box={8}>
          <path d="M1 6H7" strokeWidth="2" />
        </Svg>
      </button>
      <button aria-label="図面を元に戻す">
        <Svg size={8} box={8}>
          <path d="M1 3H5V7H1ZM3 3V1H7V5H5" />
        </Svg>
      </button>
      <button aria-label="図面を閉じる">
        <Svg size={8} box={8}>
          <path d="M1 1L7 7M7 1L1 7" strokeWidth="2" />
        </Svg>
      </button>
    </div>
    <ViewCube />
    <NavigationBar />
  </main>
);

/* ---------- command line, layout tabs, status bar ---------- */
const CommandLine = () => (
  <div className="flex h-[33px] border-t border-[#4a5160] bg-[#2a3240]">
    <div className="flex w-4 flex-col items-center justify-between pt-[2px] pb-[1px]">
      <Svg size={12} box={12}>
        <path d="M0 1H12M0 3.500H12" strokeDasharray="1.500 0.800" />
      </Svg>
      <FaWrench size={7} className="order-last" />
      <Svg size={7} box={8}>
        <path d="M1 1L7 7M7 1L1 7" strokeWidth="1.600" />
      </Svg>
    </div>
    <div className="flex-1">
      <p className="flex h-[18px] items-end border-b border-[#8b8b8b] bg-[#c8c8c8] px-[3px] text-[9px] whitespace-pre text-[#1d1d1d]">
        [図面全体(A)/中心点(C)/ダイナミック(D)/オブジェクト範囲(E)/前画面(P)/倍率(S)/窓(W)/選択オブジェクト(O)] &lt;リアル タイム&gt;: _e
      </p>
      <label className="flex h-[14px] items-center gap-[3px] bg-white px-[3px]">
        <Svg size={11} box={12}>
          <path d="M1 2H11V10H1Z" stroke="#555" />
          <path d="M3 5L5 6.500L3 8M6 8H8" stroke="#555" strokeWidth="1" />
        </Svg>
        <svg width="5" height="3" viewBox="0 0 5 3" aria-hidden="true">
          <path d="M0 0H5L2.500 3Z" fill="#444" />
        </svg>
        <input
          aria-label="コマンド"
          placeholder="ここにコマンドを入力"
          className="h-3 flex-1 text-black italic outline-none placeholder:text-[#777]"
        />
      </label>
    </div>
  </div>
);

const LayoutTabs = () => (
  <div className="flex h-[12px] gap-[2px] bg-[#222933] pl-2 text-[7px] text-[#aeb5bf]">
    <button className="w-[33px] rounded-b-md bg-[#3b4453] font-bold text-white">モデル</button>
    <button className="w-[47px] rounded-b-md bg-[#2b323e]">レイアウト1</button>
    <button className="w-[47px] rounded-b-md bg-[#2b323e]">レイアウト2</button>
    <button aria-label="新しいレイアウト" className="flex w-[15px] items-center justify-center rounded-b-md bg-[#2b323e]">
      <Svg size={6} box={8}>
        <path d="M4 0V8M0 4H8" />
      </Svg>
    </button>
  </div>
);

const status = [
  {
    label: "グリッド",
    width: "w-[15px]",
    art: <path d="M4 1V15M8 1V15M12 1V15M1 4H15M1 8H15M1 12H15" strokeWidth="1.100" />,
  },
  {
    label: "スナップ",
    width: "w-[27px]",
    caret: true,
    art: <path d="M2 3H15M2 8H15M2 13H15" strokeDasharray="2 3" strokeWidth="2" />,
  },
  {
    label: "ダイナミック入力",
    width: "w-[15px]",
    on: true,
    art: (
      <>
        <path d="M4 1V9M0 5H8" />
        <path d="M6 9H15V14H6Z" fill={W} stroke="none" />
      </>
    ),
  },
  { label: "直交モード", width: "w-4", art: <path d="M3 1V14H15M3 9H8V14" /> },
  {
    label: "極トラッキング",
    width: "w-[15px]",
    on: true,
    art: (
      <>
        <circle cx="7" cy="9" r="6" />
        <path d="M15 1L7 9H16" />
      </>
    ),
  },
  { label: "極トラッキング設定", width: "w-[9px]", caret: true },
  {
    label: "アイソメ作図",
    width: "w-[24px]",
    caret: true,
    art: (
      <>
        <path d="M8 1V15" />
        <path d="M2 3L14 14" stroke="#b86a6a" />
      </>
    ),
  },
  { label: "オブジェクトスナップトラッキング", width: "w-4", on: true, art: <path d="M14 2L3 13H15" strokeWidth="1.600" /> },
  {
    label: "オブジェクトスナップ",
    width: "w-[15px]",
    on: true,
    art: (
      <>
        <path d="M3 4H14V14H3Z" />
        <path d="M1 1H5V5H1Z" fill={W} stroke="none" />
      </>
    ),
  },
  { label: "オブジェクトスナップ設定", width: "w-[10px]", caret: true },
  {
    label: "線の太さ",
    width: "w-4",
    art: (
      <>
        <path d="M1 2.500H7M1 7H7M9 2.500H15" strokeWidth="1.300" />
        <path d="M9 7H15M1 12H15" strokeWidth="2.500" />
      </>
    ),
  },
  {
    label: "注釈オブジェクト",
    width: "w-4",
    on: true,
    art: (
      <>
        <path d="M8 2L6 9L2 14M8 2L9 9L13 14" strokeWidth="2.500" />
        <circle cx="13" cy="3" r="2" />
      </>
    ),
  },
  {
    label: "自動尺度",
    width: "w-4",
    art: (
      <>
        <path d="M8 2L6 9L2 14M8 2L9 9L13 14" strokeWidth="2.500" />
        <path d="M13 1V6M10 4H16" />
      </>
    ),
  },
  { label: "注釈尺度", width: "w-[15px]", art: <path d="M8 2L7 9L2 14M8 2L9 9L14 14" strokeWidth="2.500" /> },
];

const StatusButton = ({ label, width, on, caret, art }) => (
  <button
    aria-label={label}
    className={`mr-[1px] flex h-[15px] items-center justify-center gap-1 ${width} ${
      on ? "bg-[#5b8cc4]" : "bg-[#333c4a]"
    }`}
  >
    {art && <Svg size={12}>{art}</Svg>}
    {caret && <Caret />}
  </button>
);

const StatusBar = () => (
  <footer className="flex h-[18px] items-center justify-end bg-[#222933] pt-[2px]">
    <button className="mr-[2px] h-[15px] w-[22px] bg-[#333c4a] text-[7px] whitespace-nowrap">モデル</button>
    {status.map((item) => (
      <StatusButton key={item.label} {...item} />
    ))}
    <button className="mr-[1px] flex h-[15px] w-[20px] items-center justify-center gap-[2px] bg-[#333c4a]">
      1:1
      <Caret />
    </button>
    <button aria-label="ワークスペース" className="flex h-[15px] w-[17px] items-center justify-center bg-[#333c4a]">
      <FaCog size={10} />
    </button>
    <button className="mr-[1px] flex h-[15px] w-[49px] items-center justify-center gap-[2px] bg-[#333c4a] whitespace-nowrap">
      製図と注釈
      <Caret />
    </button>
    <StatusButton label="注釈モニター" width="w-4" art={<path d="M8 1V15M1 8H15" strokeWidth="1.600" />} />
    <StatusButton
      label="選択の分離"
      width="w-[17px]"
      art={
        <>
          <path d="M2 2H7V7H2ZM8 15L11 10L14 15Z" />
          <circle cx="13" cy="5" r="2.500" />
        </>
      }
    />
    <StatusButton
      label="ハードウェア アクセラレーション"
      width="w-4"
      art={
        <>
          <path d="M3 3H11V8H3Z" fill={Y} stroke="none" />
          <path d="M2 8H10V14H2Z" fill={B} stroke="none" />
          <path d="M7 11L10 14L16 7" stroke="#53c061" strokeWidth="2" />
        </>
      }
    />
    <StatusButton
      label="システム モニター"
      width="w-4"
      art={
        <>
          <path d="M1 2H14V11H1Z" fill={W} stroke="none" />
          <path d="M2 4L6 9L9 5L13 9" stroke="#39424f" />
          <path d="M11 8L16 16H6Z" fill="#e58a3d" stroke="none" />
        </>
      }
    />
    <span className="w-[2px]" />
    <StatusButton
      label="フルスクリーン表示"
      width="w-4"
      art={<path d="M1 3H15V13H1ZM9 8L12 5M9 5H12V8M4 8V11H7" />}
    />
    <StatusButton label="カスタマイズ" width="w-4" art={<path d="M1 3H15M1 8H15M1 13H15" strokeWidth="2" />} />
  </footer>
);

const App = () => {
  return (
    <div className="flex h-screen flex-col overflow-hidden bg-[#222933] font-[Roboto,'Noto_Sans_CJK_JP',sans-serif] text-[8px] leading-[12px] text-[#d8dde4] [font-feature-settings:'palt']">
      <div className="flex min-h-0 flex-1">
        <div className="flex min-w-0 flex-1 flex-col">
          <Header />
          <Ribbon />
          <div className="flex h-[21px] items-end border-b-2 border-[#3b4453] pl-[13px]">
            <FileTab name="0020-2ton-winch-計画図-A-1-4*" className="w-[140px]" />
            <FileTab name="10*" className="w-[81px]" />
            <FileTab name="03*" active className="w-[83px]" />
            <button
              aria-label="新規図面"
              className="mb-[2px] ml-[6px] flex h-[12px] w-[14px] items-center justify-center rounded-full bg-[#333c4a]"
            >
              <Svg size={7} box={8}>
                <path d="M4 0V8M0 4H8" />
              </Svg>
            </button>
          </div>
          <ModelSpace />
          <CommandLine />
          <LayoutTabs />
          <StatusBar />
        </div>
        <div className="flex w-[5px] flex-col">
          <div className="h-[112px] bg-black" />
          <div className="flex-1 bg-[#00adef]" />
          <div className="h-[3px] bg-[#1c3a44]" />
        </div>
      </div>
      <div className="flex h-[7px] items-end bg-[#1b2438]">
        <div className="h-full w-8 bg-[#1f3a42]" />
        <div className="flex h-full w-[228px] items-end bg-[#1f3a42]">
          <div className="h-[5px] w-full bg-[#f2f2f2]" />
        </div>
        <div className="h-full w-[293px] bg-[#1b353d]" />
        <div className="h-[5px] w-[30px] bg-[#4b5c6b]" />
        <div className="h-full flex-1 bg-linear-to-r from-[#1a2d38] to-[#1b2440]" />
      </div>
    </div>
  );
};

export default App;
